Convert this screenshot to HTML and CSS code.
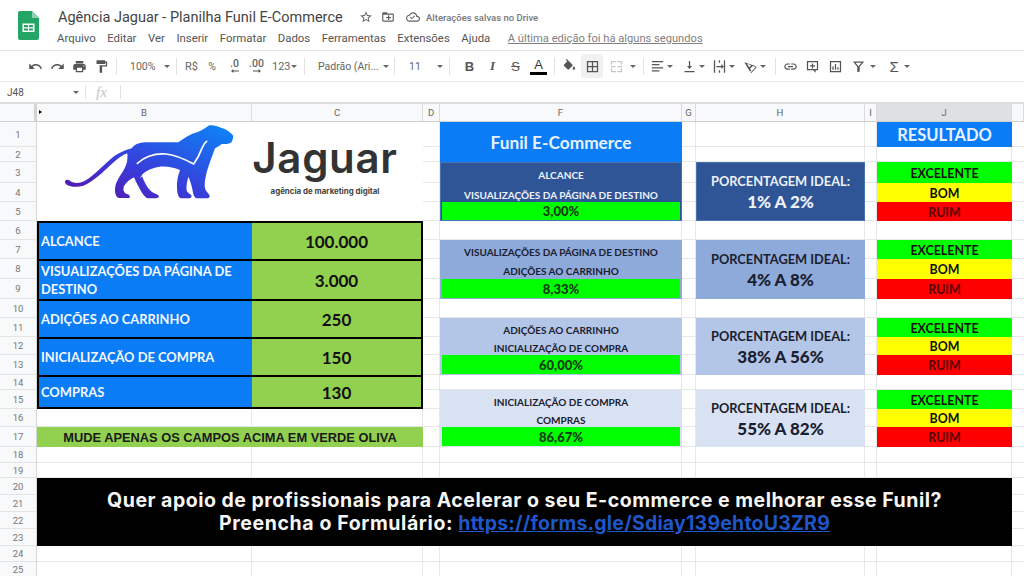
FILE: index.html
```html
<!DOCTYPE html>
<html lang="pt-BR">
<head>
<meta charset="utf-8">
<title>Agência Jaguar - Planilha Funil E-Commerce</title>
<link rel="stylesheet" href="styles.css">
</head>
<body>
<header class="appbar">
  <svg class="docicon" viewBox="0 0 21 29"><path fill="#23a566" d="M2 0h12l7 7v20a2 2 0 0 1-2 2H2a2 2 0 0 1-2-2V2a2 2 0 0 1 2-2z"/><path fill="#8ed1b1" d="M14 0l7 7h-7z"/><path fill="#fff" d="M4.500 12.500h12v8.500h-12z"/><path fill="#23a566" d="M6 14h4v2.200H6zM11 14h4v2.200h-4zM6 17.400h4v2.200H6zM11 17.400h4v2.200h-4z"/></svg>
  <div class="titlebox">
    <div class="titlerow">
      <span class="doctitle">Agência Jaguar - Planilha Funil E-Commerce</span>
      <svg class="ti ti-star" viewBox="0 0 24 24"><path d="M22 9.240l-7.190-.62L12 2 9.190 8.630 2 9.240l5.460 4.730L5.820 21 12 17.270 18.180 21l-1.630-7.030L22 9.240zM12 15.400l-3.760 2.270 1-4.280-3.320-2.880 4.380-.38L12 6.100l1.710 4.040 4.380.38-3.320 2.880 1 4.280L12 15.400z"/></svg>
      <svg class="ti ti-folder" viewBox="0 0 24 24"><path d="M20 6h-8l-2-2H4c-1.100 0-2 .9-2 2v12c0 1.100.9 2 2 2h16c1.100 0 2-.9 2-2V8c0-1.100-.9-2-2-2zm0 12H4V8h16v10zm-8-1h2v-3h3v-2h-3V9h-2v3H9v2h3z"/></svg>
      <svg class="ti ti-cloud" viewBox="0 0 24 24"><path d="M19.350 10.040C18.670 6.590 15.640 4 12 4 9.110 4 6.600 5.640 5.350 8.040 2.340 8.360 0 10.910 0 14c0 3.310 2.690 6 6 6h13c2.760 0 5-2.240 5-5 0-2.640-2.050-4.780-4.650-4.960zM19 18H6c-2.210 0-4-1.790-4-4 0-2.050 1.530-3.760 3.560-3.970l1.070-.11.5-.95C8.080 7.140 9.940 6 12 6c2.620 0 4.880 1.860 5.390 4.430l.3 1.500 1.530.11c1.560.1 2.780 1.410 2.780 2.960 0 1.650-1.350 3-3 3zM10 13.500l-2-2-1.200 1.200L10 16l5.500-5.500-1.200-1.200z"/></svg>
      <span class="saved">Alterações salvas no Drive</span>
    </div>
    <nav class="menu">
      <span>Arquivo</span><span>Editar</span><span>Ver</span><span>Inserir</span><span>Formatar</span><span>Dados</span><span>Ferramentas</span><span>Extensões</span><span>Ajuda</span>
      <a class="lastedit">A última edição foi há alguns segundos</a>
    </nav>
  </div>
</header>

<div class="toolbar">
  <span class="tb"><svg viewBox="0 0 24 24"><path d="M12.500 8c-2.650 0-5.050.99-6.900 2.600L2 7v9h9l-3.620-3.620c1.390-1.160 3.160-1.880 5.120-1.880 3.540 0 6.550 2.310 7.600 5.500l2.370-.78C21.080 11.030 17.150 8 12.500 8z"/></svg></span>
  <span class="tb"><svg viewBox="0 0 24 24"><path d="M18.400 10.600C16.550 8.990 14.150 8 11.500 8c-4.650 0-8.580 3.030-9.960 7.220L3.900 16c1.050-3.190 4.050-5.500 7.600-5.500 1.950 0 3.730.72 5.120 1.880L13 16h9V7l-3.600 3.600z"/></svg></span>
  <span class="tb"><svg viewBox="0 0 24 24"><path d="M19 8H5c-1.660 0-3 1.340-3 3v6h4v4h12v-4h4v-6c0-1.660-1.340-3-3-3zm-3 11H8v-5h8v5zm3-7c-.55 0-1-.45-1-1s.45-1 1-1 1 .45 1 1-.45 1-1 1zm-1-9H6v4h12V3z"/></svg></span>
  <span class="tb"><svg viewBox="0 0 24 24"><path d="M18 4V3c0-.55-.45-1-1-1H5c-.55 0-1 .45-1 1v4c0 .55.45 1 1 1h12c.55 0 1-.45 1-1V6h1v4H9v11c0 .55.45 1 1 1h2c.55 0 1-.45 1-1v-9h8V4h-3z"/></svg></span>
  <i class="sep s1"></i>
  <span class="tt w-zoom">100%</span><b class="caret c-zoom"></b>
  <i class="sep s2"></i>
  <span class="tt w-rs">R$</span><span class="tt w-pct">%</span>
  <span class="tt w-d1 dec">.0<svg viewBox="0 0 10 5"><path d="M10 2v1H3v2L0 2.500 3 0v2z"/></svg></span>
  <span class="tt w-d2 dec">.00<svg viewBox="0 0 10 5"><path d="M0 2v1h7v2l3-2.500L7 0v2z"/></svg></span>
  <span class="tt w-123">123</span><b class="caret c-123"></b>
  <i class="sep s3"></i>
  <span class="tt w-font">Padrão (Ari...</span><b class="caret c-font"></b>
  <i class="sep s4"></i>
  <span class="tt w-size">11</span><b class="caret c-size"></b>
  <i class="sep s5"></i>
  <span class="fmt fb">B</span><span class="fmt fi">I</span><span class="fmt fs">S</span>
  <span class="fmt fa">A<i class="abar"></i></span>
  <i class="sep s6"></i>
  <span class="tb fill"><svg viewBox="0 0 24 24"><path d="M16.560 8.940L7.620 0 6.210 1.410l2.380 2.380-5.150 5.150c-.59.59-.59 1.540 0 2.120l5.500 5.500c.29.29.68.44 1.060.44s.77-.15 1.060-.44l5.500-5.500c.59-.58.59-1.530 0-2.120zM19 11.500s-2 2.170-2 3.500c0 1.100.9 2 2 2s2-.9 2-2c0-1.330-2-3.500-2-3.500z"/></svg></span>
  <span class="tb borders"><svg viewBox="0 0 24 24"><path d="M3 3v18h18V3H3zm8 16H5v-6h6v6zm0-8H5V5h6v6zm8 8h-6v-6h6v6zm0-8h-6V5h6v6z"/></svg></span>
  <span class="tb merge"><svg viewBox="0 0 24 24"><path fill="#c4c7c5" d="M3 3h8v2H5v4H3zM13 3h8v6h-2V5h-6zM3 15h2v4h6v2H3zM19 15h2v6h-8v-2h6zM3 11h7v2H3zM14 11h7v2h-7z"/></svg></span><b class="caret c-merge"></b>
  <i class="sep s7"></i>
  <span class="tb t-al"><svg viewBox="0 0 24 24"><path d="M3 3h18v2H3zM3 8h12v2H3zM3 13h18v2H3zM3 18h12v2H3z"/></svg></span><b class="caret c-al"></b>
  <span class="tb t-va"><svg viewBox="0 0 24 24"><path d="M4 19h16v2H4zM11 3h2v8h3l-4 5-4-5h3z"/></svg></span><b class="caret c-al"></b>
  <span class="tb t-wr"><svg viewBox="0 0 24 24"><path d="M3 2h2v20H3zM19 2h2v20h-2zM7 11h8V8l4 4-4 4v-3H7zM11 2h2v4h-2zM11 18h2v4h-2z"/></svg></span><b class="caret c-al"></b>
  <span class="tb t-ro"><svg viewBox="0 0 24 24"><path d="M2 5l19 6.500-2 .8-3.500-1.200-4 4 1.400 3.700-1.600 1.500zM6.500 7.500l3.300 5.800 3.200-3.200zM12 22l9-10 1 1-8.500 9.500z"/></svg></span><b class="caret c-al"></b>
  <i class="sep s8"></i>
  <span class="tb t-li"><svg viewBox="0 0 24 24"><path d="M3.900 12c0-1.710 1.390-3.100 3.100-3.100h4V7H7c-2.760 0-5 2.240-5 5s2.240 5 5 5h4v-1.900H7c-1.710 0-3.100-1.390-3.100-3.100zM8 13h8v-2H8v2zm9-6h-4v1.900h4c1.710 0 3.100 1.390 3.100 3.100s-1.390 3.100-3.100 3.100h-4V17h4c2.760 0 5-2.240 5-5s-2.240-5-5-5z"/></svg></span>
  <span class="tb t-gap"><svg viewBox="0 0 24 24"><path d="M3 3h18v15h-4v4l-4-4H3zM5 5v11h9l1 1v-1h4V5zM11 7h2v3h3v2h-3v3h-2v-3H8v-2h3z"/></svg></span>
  <span class="tb t-gap"><svg viewBox="0 0 24 24"><path d="M3 3h18v18H3zM5 5v14h14V5zM7 12h2v5H7zM11 8h2v9h-2zM15 13h2v4h-2z"/></svg></span>
  <span class="tb t-gap"><svg viewBox="0 0 24 24"><path d="M3 4h18l-7 8.500V20l-4 1v-8.500zM7.200 6l4.800 5.700v6.500l0 0 .1-.1V11.700L16.800 6z"/></svg></span><b class="caret c-fil"></b>
  <span class="fmt sigma">Σ</span><b class="caret c-sig"></b>
</div>

<div class="formula">
  <span class="namebox">J48</span><b class="caret c-name"></b>
  <i class="sep fs1"></i>
  <span class="fx">fx</span>
  <i class="sep fs2"></i>
</div>

<main class="sheet">
  <div class="hl">
    <i></i><i></i><i></i><i></i><i></i><i></i><i></i><i></i><i></i><i></i><i></i><i></i><i></i>
    <i></i><i></i><i></i><i></i><i></i><i></i><i></i><i></i><i></i><i></i><i></i><i></i><i></i>
  </div>
  <div class="vl"><i></i><i></i><i></i><i></i><i></i><i></i><i></i><i></i><i></i></div>

  <div class="colhead">
    <span class="corner"></span><span>B</span><span>C</span><span>D</span><span>F</span><span>G</span><span>H</span><span>I</span><span class="sel">J</span><span></span>
  </div>
  <div class="rowhead">
    <span>1</span><span>2</span><span>3</span><span>4</span><span>5</span><span>6</span><span>7</span><span>8</span><span>9</span><span>10</span><span>11</span><span>12</span><span>13</span><span>14</span><span>15</span><span>16</span><span>17</span><span>18</span><span>19</span><span>20</span><span>21</span><span>22</span><span>23</span><span>24</span><span>25</span>
  </div>

  <div class="logo">
    <svg class="panther" viewBox="0 6 600 249">
      <defs><linearGradient id="pg" x1="0" y1="1" x2="1" y2="0"><stop offset="0" stop-color="#5a12a8"/><stop offset=".4" stop-color="#3a3ad8"/><stop offset="1" stop-color="#0a88fa"/></linearGradient></defs>
      <path fill="url(#pg)" d="M45 184C48 178 55 178 62 184C75 192 95 190 115 176C140 158 165 130 190 110C210 96 235 88 245 85C255 72 268 68 285 67L385 67C400 55 420 42 445 35C458 30 470 22 478 16C490 14 505 20 522 26C535 32 545 40 550 48C549 56 547 64 543 68C535 72 525 72 515 72C508 78 500 82 495 85C488 105 478 130 472 150C465 175 462 195 466 208C470 218 478 222 479 228C479 233 475 235 470 235L440 235C432 232 430 222 428 212C425 195 420 180 415 170C411 185 408 200 410 212C414 220 423 222 425 228C425 233 420 235 416 235L392 235C385 232 382 222 381 205C380 180 385 165 390 150C365 140 335 135 310 145C295 150 285 155 275 165C282 185 292 205 305 215C315 222 325 222 327 229C327 233 322 235 318 235L292 235C280 228 268 205 258 185L252 172C240 178 228 188 222 198C218 210 222 218 230 222C238 224 242 228 238 234L208 234C198 232 195 222 195 210C195 190 205 175 218 155C228 140 234 125 232 100C218 105 205 115 185 132C160 155 130 185 100 197C80 203 60 200 50 194C46 191 44 188 45 184Z"/>
      <path fill="none" stroke="#fff" stroke-width="5" stroke-linecap="round" stroke-linejoin="round" d="M262 130c20-18 50-30 85-28 30 3 62 18 84 30 10-14 20-34 26-50 3-8 7-14 13-18"/>
      <path fill="none" stroke="#fff" stroke-width="2.500" stroke-linecap="round" d="M272 172c10-10 20-18 33-24"/>
    </svg>
    <div class="wordmark">
      <div class="wm-name">Jaguar</div>
      <div class="wm-sub">agência de marketing digital</div>
    </div>
  </div>

  <div class="lbl r-a">ALCANCE</div><div class="val r-a">100.000</div>
  <div class="lbl r-b">VISUALIZAÇÕES DA PÁGINA DE DESTINO</div><div class="val r-b">3.000</div>
  <div class="lbl r-c">ADIÇÕES AO CARRINHO</div><div class="val r-c">250</div>
  <div class="lbl r-d">INICIALIZAÇÃO DE COMPRA</div><div class="val r-d">150</div>
  <div class="lbl r-e">COMPRAS</div><div class="val r-e">130</div>
  <div class="note">MUDE APENAS OS CAMPOS ACIMA EM VERDE OLIVA</div>

  <div class="funtitle">Funil E-Commerce</div>
  <div class="fun f1 tone1"><span>ALCANCE</span><span>VISUALIZAÇÕES DA PÁGINA DE DESTINO</span><strong>3,00%</strong></div>
  <div class="fun f2 tone2"><span>VISUALIZAÇÕES DA PÁGINA DE DESTINO</span><span>ADIÇÕES AO CARRINHO</span><strong>8,33%</strong></div>
  <div class="fun f3 tone3"><span>ADIÇÕES AO CARRINHO</span><span>INICIALIZAÇÃO DE COMPRA</span><strong>60,00%</strong></div>
  <div class="fun f4 tone4"><span>INICIALIZAÇÃO DE COMPRA</span><span>COMPRAS</span><strong>86,67%</strong></div>

  <div class="ideal f1 tone1"><span>PORCENTAGEM IDEAL:</span><strong>1% A 2%</strong></div>
  <div class="ideal f2 tone2"><span>PORCENTAGEM IDEAL:</span><strong>4% A 8%</strong></div>
  <div class="ideal f3 tone3"><span>PORCENTAGEM IDEAL:</span><strong>38% A 56%</strong></div>
  <div class="ideal f4 tone4"><span>PORCENTAGEM IDEAL:</span><strong>55% A 82%</strong></div>

  <div class="restitle">RESULTADO</div>
  <div class="res f1"><span class="ex">EXCELENTE</span><span class="bo">BOM</span><span class="ru">RUIM</span></div>
  <div class="res f2"><span class="ex">EXCELENTE</span><span class="bo">BOM</span><span class="ru">RUIM</span></div>
  <div class="res f3"><span class="ex">EXCELENTE</span><span class="bo">BOM</span><span class="ru">RUIM</span></div>
  <div class="res f4"><span class="ex">EXCELENTE</span><span class="bo">BOM</span><span class="ru">RUIM</span></div>

  <div class="banner">
    <p class="b1">Quer apoio de profissionais para Acelerar o seu E-commerce e melhorar esse Funil?</p>
    <p class="b2">Preencha o Formulário: <a>https://forms.gle/Sdiay139ehtoU3ZR9</a></p>
  </div>
</main>
</body>
</html>
```
FILE: styles.css
```css
* { box-sizing: border-box; }
html, body { margin: 0; height: 576px; overflow: hidden; background: #fff; }
body { font-family: Roboto, "Liberation Sans", sans-serif; color: #444; display: flex; flex-direction: column; }

/* app bar */
.appbar { height: 51px; flex: none; display: flex; padding-left: 18px; border-bottom: 1px solid #e4e4e4; }
.docicon { width: 21px; height: 29px; margin-top: 11px; flex: none; }
.titlebox { margin-left: 19px; }
.titlerow { display: flex; align-items: center; height: 20px; margin-top: 7px; }
.doctitle { font-size: 14.500px; color: #444; width: 300px; white-space: nowrap; }
.ti { width: 14px; height: 14px; fill: #5f6368; flex: none; margin-left: 1px; }
.ti-folder { margin-left: 8px; }
.ti-cloud { margin-left: 11px; }
.saved { font-size: 9.500px; color: #777; margin-left: 6px; font-weight: 500; white-space: nowrap; }
.menu { display: flex; gap: 11.500px; height: 20px; align-items: center; margin-top: 1px; font-size: 11.400px; color: #555; margin-left: -1px; white-space: nowrap; }
.lastedit { color: #808080; text-decoration: underline; margin-left: 6px; font-size: 11.150px; }

/* toolbar */
.toolbar { height: 31px; flex: none; display: flex; align-items: center; padding-left: 24px; border-bottom: 1px solid #e6e6e6; font-size: 10.500px; color: #666; }
.tb { width: 22px; height: 24px; display: flex; align-items: center; justify-content: center; flex: none; }
.tb svg { width: 15px; height: 15px; fill: #555; }
.tt { flex: none; white-space: nowrap; }
.sep { width: 1px; height: 17px; background: #e2e2e2; flex: none; display: block; }
.caret { width: 0; height: 0; border: 3px solid transparent; border-top: 3.500px solid #666; border-bottom: 0; flex: none; }
.s1 { margin: 0 13px 0 4px; }
.w-zoom { width: 24px; }
.c-zoom { margin-left: 10px; }
.s2 { margin: 0 8px 0 6px; }
.w-rs { width: 18px; font-size: 11px; }
.w-pct { width: 18px; text-align: center; }
.w-d1, .w-d2 { display: inline-flex; flex-direction: column; align-items: center; font-weight: 500; line-height: 10px; }
.w-d1 { width: 23px; margin-left: 2px; }
.w-d2 { width: 21px; }
.dec svg { width: 8px; height: 4px; fill: #555; margin-top: 0; }
.w-123 { width: 18px; margin-left: 5px; font-size: 11px; }
.c-123 { margin-left: 1px; }
.s3 { margin: 0 13px 0 7px; }
.w-font { width: 60px; }
.c-font { margin-left: 5px; }
.s4 { margin: 0 14px 0 5px; }
.w-size { width: 26px; }
.c-size { margin-left: 2px; }
.s5 { margin: 0 8px 0 6px; }
.fmt { width: 23px; flex: none; text-align: center; font-family: "Liberation Sans", sans-serif; font-size: 13px; color: #555; }
.fb { font-weight: 700; }
.fi { font-style: italic; font-family: "Liberation Serif", serif; font-weight: 700; }
.fs { text-decoration: line-through; font-weight: 400; }
.fa { display: inline-flex; flex-direction: column; align-items: center; line-height: 13px; color: #333; }
.abar { width: 17px; height: 3px; background: #000; display: block; margin-top: 1px; }
.s6 { margin: 0 3px 0 4px; }
.borders { background: #f1f1f1; border-radius: 2px; margin: 0 1px; }
.merge { margin-left: 1px; }
.c-merge { margin-left: 3px; }
.s7 { margin: 0 3px 0 7px; }
.c-al { margin-left: 0; margin-right: 3px; }
.t-al, .t-va, .t-wr, .t-ro { width: 20px; }
.t-va { margin-left: 3px; }
.t-wr { margin-left: 1px; }
.t-ro { margin-left: 2px; }
.s8 { margin: 0 3px 0 6px; }
.t-gap { margin-left: .7px; }
.c-fil { margin: 0 9px 0 1px; }
.sigma { width: 18px; font-size: 15px; }
.c-sig { margin-left: 1px; }

/* formula bar */
.formula { height: 20px; flex: none; display: flex; align-items: center; padding-left: 7px; font-size: 10px; color: #555; }
.namebox { width: 66px; }
.c-name { margin-right: 6px; }
.fs1 { margin-right: 10px; height: 14px; }
.fx { width: 24px; font-family: "Liberation Serif", serif; font-style: italic; font-size: 15px; color: #c4c4c4; }
.fs2 { height: 14px; }

/* sheet */
.sheet {
  --cols: 37px 215px 171px 17px 242px 14px 169px 12px 135px 1fr;
  --rows: 20px 25px 15px 21px 19px 19px 19px 19px 20px 20px 19px 19px 18px 20px 15px 19px 18px 20px 16px 15px 17px 17px 17px 17px 16px 16px;
  height: 474px; flex: none; display: grid; grid-template-columns: var(--cols); grid-template-rows: var(--rows); overflow: hidden;
}
.hl, .vl { grid-area: 1 / 1 / -1 / -1; display: grid; }
.hl { grid-template-rows: var(--rows); }
.hl i { border-bottom: 1px solid #e6e7e8; display: block; }
.vl { grid-template-columns: var(--cols); grid-template-rows: 1fr; }
.vl i { border-right: 1px solid #e6e7e8; display: block; }
.colhead { grid-area: 1 / 1 / 2 / -1; display: grid; grid-template-columns: var(--cols); background: #f8f9fa; border-top: 2px solid #dcdcdc; border-bottom: 1px solid #d0d0d0; font-size: 9.500px; color: #666; }
.colhead span { display: flex; align-items: center; justify-content: center; border-right: 1px solid #dcdcdc; padding-bottom: 1px; }
.colhead .corner { border-right: 3px solid #d4d4d4; background: #f8f9fa; }
.colhead .sel { background: #dfe0e2; }
.colhead span:nth-child(2)::before { content: ""; width: 0; height: 0; border: 2.500px solid transparent; border-left: 3.500px solid #000; border-right: 0; margin-right: 99px; margin-left: -2px; }
.colhead span:nth-child(2) { justify-content: flex-start; padding-left: 4px; }
.rowhead { grid-area: 2 / 1 / -1 / 2; display: grid; grid-template-rows: subgrid; grid-template-columns: 1fr; background: #f8f9fa; border-right: 1px solid #d6d6d6; font-size: 9.500px; color: #777; }
.rowhead span { display: flex; align-items: center; justify-content: center; border-bottom: 1px solid #e4e4e4; }

/* logo */
.logo { grid-area: 2 / 2 / 7 / 4; background: #fff; display: flex; padding-left: 13px; align-items: flex-start; }
.panther { width: 200px; height: 83px; flex: none; }
.wordmark { margin-left: 2px; width: 146px; text-align: center; }
.wm-name { font-family: Inter, sans-serif; font-weight: 600; font-size: 42px; letter-spacing: .7px; line-height: 50px; color: #333; margin-top: 11px; white-space: nowrap; }
.wm-sub { font-family: Inter, sans-serif; font-weight: 700; font-size: 7.900px; color: #444; margin-top: 3px; white-space: nowrap; }

/* input table */
.lbl, .val { display: flex; align-items: center; font-family: Lato, sans-serif; font-weight: 700; border-style: solid; border-color: #000; border-width: 2px 0 0 2px; }
.lbl { grid-column: 2; background: #0a7cf5; color: #f4f8ff; font-size: 12.900px; line-height: 18px; padding-left: 2px; }
.val { grid-column: 3; background: #92d050; color: #111; font-size: 17px; justify-content: center; border-width: 2px 2px 0 0; }
.r-a { grid-row: 7 / 9; }
.r-b { grid-row: 9 / 11; }
.r-c { grid-row: 11 / 13; }
.r-d { grid-row: 13 / 15; }
.r-e { grid-row: 15 / 17; border-bottom-width: 2px; }
.note { grid-area: 18 / 2 / 19 / 4; background: #92d050; display: flex; align-items: center; justify-content: center; font-family: "Liberation Sans", sans-serif; font-weight: 700; font-size: 12.840px; color: #1a1a1a; }

/* funnel */
.funtitle { grid-area: 2 / 5 / 4 / 6; background: #0a7cf5; color: #e8f2ff; font-family: Lato, sans-serif; font-weight: 700; font-size: 17.300px; display: flex; align-items: center; justify-content: center; }
.f1 { grid-row: 4 / 7; }
.f2 { grid-row: 8 / 11; }
.f3 { grid-row: 12 / 15; }
.f4 { grid-row: 16 / 19; }
.tone1 { background: #2f5597; color: #eef1f7; box-shadow: inset 0 0 0 1px #4674ad; }
.tone2 { background: #8eaadb; color: #1a2030; }
.tone3 { background: #b4c6e7; color: #1a2030; }
.tone4 { background: #d9e2f3; color: #1a2030; }
.fun { grid-column: 5; display: grid; grid-template-rows: subgrid; padding: 0 2px 1px; font-family: Lato, sans-serif; font-weight: 700; font-size: 10px; text-align: center; }
.fun span { display: flex; align-items: center; justify-content: center; padding-top: 4px; }
.fun strong { background: #00ff00; color: #123a12; font-size: 13px; display: flex; align-items: center; justify-content: center; }
.ideal { grid-column: 7; display: flex; flex-direction: column; align-items: center; justify-content: center; font-family: Lato, sans-serif; font-weight: 700; }
.ideal span { font-size: 12.800px; line-height: 20px; }
.ideal strong { font-size: 17px; line-height: 21px; }

/* result */
.restitle { grid-area: 2 / 9 / 3 / 10; background: #0a7cf5; color: #e8f2ff; font-family: Lato, sans-serif; font-weight: 700; font-size: 16.500px; display: flex; align-items: center; justify-content: center; }
.res { grid-column: 9; display: grid; grid-template-rows: subgrid; font-family: Lato, sans-serif; font-weight: 700; font-size: 12.400px; color: #111; text-align: center; }
.res span { display: flex; align-items: center; justify-content: center; padding-top: 1px; }
.ex { background: #00ff00; }
.bo { background: #ffff00; }
.ru { background: #ff0000; color: #5a0000; }

/* banner */
.banner { grid-area: 21 / 2 / 25 / 11; margin-right: 12px; background: #000; color: #f6f6f6; display: flex; flex-direction: column; align-items: center; justify-content: center; font-family: Inter, sans-serif; font-weight: 700; font-size: 19.500px; line-height: 23px; text-align: center; }
.banner p { margin: 0; white-space: nowrap; }
.b1 { letter-spacing: .5px; }
.b2 { letter-spacing: .6px; }
.banner a { color: #1f56c8; text-decoration: underline; letter-spacing: .2px; }
```
